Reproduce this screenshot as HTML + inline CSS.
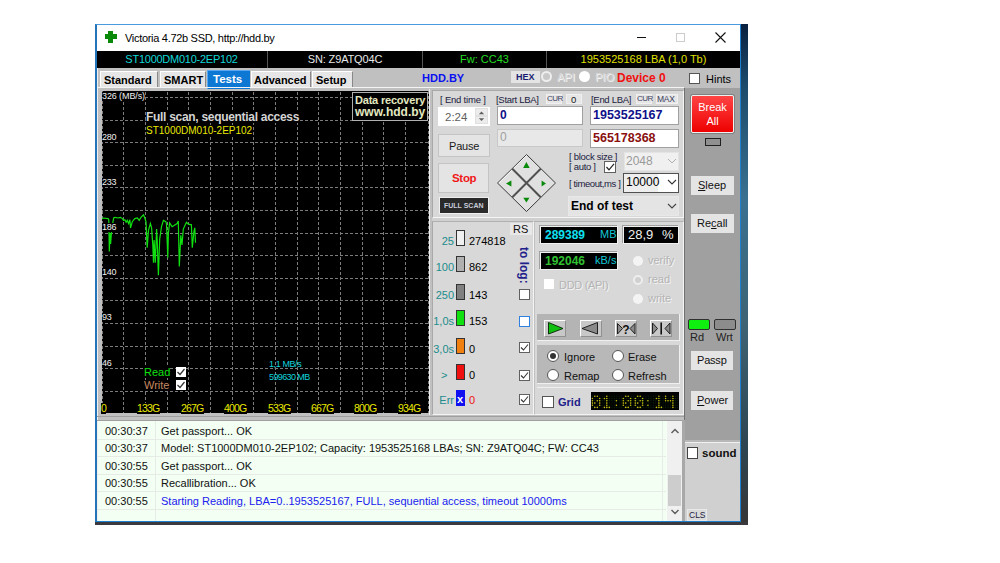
<!DOCTYPE html>
<html><head><meta charset="utf-8">
<style>
*{margin:0;padding:0;box-sizing:border-box}
html,body{width:1000px;height:563px;overflow:hidden;background:#fff;font-family:"Liberation Sans",sans-serif}
.a{position:absolute}
.t{position:absolute;white-space:pre;line-height:1}
.btn{position:absolute;background:#e1e1e1;border:1px solid #adadad;text-align:center;color:#000}
.chk{position:absolute;background:#fff;border:1px solid #555}
</style></head><body>
<!-- desktop strips -->
<div class="a" style="left:741px;top:24px;width:7px;height:500px;background:linear-gradient(#0a2040,#1c4a6a 12%,#3a7090 35%,#3e6474 60%,#2e4450 85%,#363636)"></div>
<div class="a" style="left:95px;top:522px;width:653px;height:3px;background:#3a3a3e"></div>
<!-- window -->
<div class="a" style="left:95px;top:24px;width:646px;height:498px;border:1px solid #1c7fd0;border-top-color:#4a9ae0;border-left:2px solid #2674b8;background:#c0c0c0"></div>
<div class="a" style="left:97px;top:25px;width:1px;height:496px;background:#f0f0f0"></div>
<!-- title bar -->
<div class="a" style="left:97px;top:25px;width:643px;height:26px;background:#fff"></div>
<div class="a" style="left:105px;top:34px;width:12px;height:5px;background:#088a08"></div>
<div class="a" style="left:108px;top:31px;width:5px;height:12px;background:#088a08"></div>
<div class="t" style="left:125px;top:33px;font-size:11px;letter-spacing:-0.3px;color:#000">Victoria 4.72b SSD, http://hdd.by</div>
<div class="a" style="left:637px;top:37px;width:9px;height:1px;background:#111"></div>
<div class="a" style="left:676px;top:33px;width:9px;height:9px;border:1px solid #ccc"></div>
<svg class="a" style="left:715px;top:32px" width="11" height="11"><path d="M0.5 0.5L10.5 10.5M10.5 0.5L0.5 10.5" stroke="#111" stroke-width="1.1"/></svg>
<!-- black info bar -->
<div class="a" style="left:97px;top:51px;width:643px;height:17px;background:#000"></div>
<div class="a" style="left:267px;top:51px;width:1px;height:17px;background:#555"></div>
<div class="a" style="left:422px;top:51px;width:1px;height:17px;background:#555"></div>
<div class="a" style="left:546px;top:51px;width:1px;height:17px;background:#555"></div>
<div class="t" style="left:96px;width:171px;top:54px;text-align:center;font-size:11px;letter-spacing:-0.25px;color:#10d8d8">ST1000DM010-2EP102</div>
<div class="t" style="left:268px;width:154px;top:54px;text-align:center;font-size:11px;letter-spacing:-0.15px;color:#e8e8e8">SN: Z9ATQ04C</div>
<div class="t" style="left:423px;width:123px;top:54px;text-align:center;font-size:11px;color:#22dd22">Fw: CC43</div>
<div class="t" style="left:547px;width:193px;top:54px;text-align:center;font-size:11px;color:#e0e000">1953525168 LBA (1,0 Tb)</div>

<!-- tab row -->
<div class="a" style="left:100px;top:71px;width:58px;height:16px;background:#e6e6e6;border-top:1px solid #fff;border-left:1px solid #fff;border-right:1px solid #888"></div>
<div class="t" style="left:104px;top:75px;font-size:11px;font-weight:bold;color:#000">Standard</div>
<div class="a" style="left:160px;top:71px;width:46px;height:16px;background:#e6e6e6;border-top:1px solid #fff;border-left:1px solid #fff;border-right:1px solid #888"></div>
<div class="t" style="left:164px;top:75px;font-size:11px;font-weight:bold;color:#000">SMART</div>
<div class="a" style="left:207px;top:70px;width:43px;height:19px;background:#0d78d4;border-top:1px solid #5aa8f0;border-left:1px solid #5aa8f0"></div>
<div class="t" style="left:213px;top:74px;font-size:11.5px;font-weight:bold;color:#fff">Tests</div>
<div class="a" style="left:251px;top:71px;width:60px;height:16px;background:#e6e6e6;border-top:1px solid #fff;border-left:1px solid #fff;border-right:1px solid #888"></div>
<div class="t" style="left:254px;top:75px;font-size:11px;font-weight:bold;color:#000">Advanced</div>
<div class="a" style="left:312px;top:71px;width:41px;height:16px;background:#e6e6e6;border-top:1px solid #fff;border-left:1px solid #fff;border-right:1px solid #888"></div>
<div class="t" style="left:316px;top:75px;font-size:11px;font-weight:bold;color:#000">Setup</div>
<div class="t" style="left:422px;top:73px;font-size:11px;font-weight:bold;color:#0a10f0">HDD.BY</div>
<div class="a" style="left:511px;top:71px;width:29px;height:12px;background:#e4e4e4"></div>
<div class="t" style="left:516px;top:73px;font-size:9px;font-weight:bold;color:#1a1a70">HEX</div>
<div class="a" style="left:541px;top:71px;width:11px;height:11px;border-radius:50%;background:#c8c8c8;border:2px solid #eee"></div>
<div class="t" style="left:557px;top:72px;font-size:11px;color:#d8d8d8;text-shadow:1px 1px 0 #f4f4f4">API</div>
<div class="a" style="left:579px;top:71px;width:11px;height:11px;border-radius:50%;background:#fff"></div>
<div class="t" style="left:595px;top:72px;font-size:11px;color:#d8d8d8;text-shadow:1px 1px 0 #f4f4f4">PIO</div>
<div class="t" style="left:617px;top:72px;font-size:12px;font-weight:bold;color:#f01010">Device 0</div>
<div class="chk" style="left:689px;top:73px;width:11px;height:11px"></div>
<div class="t" style="left:706px;top:74px;font-size:11px;color:#000">Hints</div>
<!-- content frame lines -->
<div class="a" style="left:97px;top:87px;width:587px;height:1px;background:#f4f4f4"></div>
<!-- graph -->
<div class="a" style="left:102px;top:91px;width:327px;height:322px;background:#000"></div>
<svg class="a" style="left:102px;top:91px" width="327" height="322">
<path d="M0.5 0V322M326.5 0V322" stroke="#808080" stroke-width="1" stroke-dasharray="3 2"/>
<path d="M21.5 0V322M43.5 0V322M65.5 0V322M86.5 0V322M108.5 0V322M130.5 0V322M151.5 0V322M173.5 0V322M195.5 0V322M216.5 0V322M238.5 0V322M260.5 0V322M281.5 0V322M303.5 0V322" stroke="#7c7c7c" stroke-width="1" stroke-dasharray="3 2" stroke-dashoffset="4"/><path d="M0 6.5H327M0 29.5H327M0 51.5H327M0 74.5H327M0 96.5H327M0 119.5H327M0 142.5H327M0 164.5H327M0 187.5H327M0 209.5H327M0 232.5H327M0 255.5H327M0 277.5H327M0 300.5H327" stroke="#7c7c7c" stroke-width="1" stroke-dasharray="3 2" stroke-dashoffset="2"/>
<polyline fill="none" stroke="#10e010" stroke-width="1.2" points="-0.5,128.2 1.1,127.0 6.1,127.6 6.8,129.0 7.3,160.5 8.0,142.0 8.6,153.0 9.8,137.0 11.7,127.0 13.0,126.3 16.0,127.0 18.5,126.3 20.4,127.6 21.6,129.4 22.9,128.8 24.1,131.3 25.3,129.4 26.6,132.5 27.9,128.8 28.5,137.0 30.3,130.7 32.8,127.6 35.3,127.0 37.2,129.4 39.0,126.3 41.5,123.8 42.8,127.0 44.0,130.7 45.2,156.8 46.5,139.0 48.4,132.5 49.6,136.9 50.8,154.3 51.5,171.7 52.1,149.0 53.3,171.7 54.6,138.1 55.2,149.0 56.4,184.2 57.7,148.0 59.5,135.7 61.4,129.4 63.9,130.7 64.5,133.0 65.8,166.8 66.4,142.0 67.6,131.9 70.1,135.7 75.1,132.5 76.3,130.0 77.3,175.5 78.8,144.4 80.0,154.0 81.3,138.1 84.4,131.3 86.3,133.2 89.4,133.8 90.3,156.8 91.9,140.6 92.8,136.9 93.5,151.8"/>
</svg>
<div class="t" style="background:#000;left:102px;top:92px;font-size:9px;letter-spacing:-0.1px;color:#f0f0f0">326 (MB/s)</div>
<div class="t" style="background:#000;left:102px;top:133px;font-size:9px;letter-spacing:-0.3px;color:#f0f0f0">280</div>
<div class="t" style="background:#000;left:102px;top:178px;font-size:9px;letter-spacing:-0.3px;color:#f0f0f0">233</div>
<div class="t" style="background:#000;left:102px;top:223px;font-size:9px;letter-spacing:-0.3px;color:#f0f0f0">186</div>
<div class="t" style="background:#000;left:102px;top:268px;font-size:9px;letter-spacing:-0.3px;color:#f0f0f0">140</div>
<div class="t" style="background:#000;left:102px;top:313px;font-size:9px;letter-spacing:-0.3px;color:#f0f0f0">93</div>
<div class="t" style="background:#000;left:102px;top:359px;font-size:9px;letter-spacing:-0.3px;color:#f0f0f0">46</div>
<div class="t" style="background:#000;left:146px;top:111px;font-size:12px;font-weight:bold;letter-spacing:-0.3px;color:#d4d4d4">Full scan, sequential access</div>
<div class="t" style="background:#000;left:146px;top:126px;font-size:10px;color:#e8e800">ST1000DM010-2EP102</div>
<div class="a" style="left:352px;top:92px;width:76px;height:29px;background:#000;border:1px solid #b0b0b0"></div>
<div class="t" style="left:355px;top:95px;font-size:11px;letter-spacing:-0.2px;font-weight:bold;color:#e4e8c0">Data recovery</div>
<div class="t" style="left:355px;top:106px;font-size:12px;font-weight:bold;color:#e4e8c0">www.hdd.by</div>
<div class="t" style="background:#000;left:144px;top:367px;font-size:11px;color:#10e010">Read</div>
<div class="t" style="background:#000;left:144px;top:380px;font-size:11px;color:#c88860">Write</div>
<div class="a" style="left:176px;top:367px;width:10px;height:10px;background:#fff"></div>
<div class="a" style="left:176px;top:380px;width:10px;height:10px;background:#fff"></div>
<svg class="a" style="left:176px;top:367px" width="10" height="24"><path d="M1.5 5L4 7.5L8.5 2M1.5 18L4 20.5L8.5 15" fill="none" stroke="#333" stroke-width="1.2"/></svg>
<div class="t" style="left:269px;top:360px;font-size:9px;letter-spacing:-0.4px;color:#10d4dc">1,1 MB/s</div>
<div class="t" style="left:269px;top:373px;font-size:9px;letter-spacing:-0.6px;color:#10d4dc">599630 MB</div>
<div class="t" style="background:#000;left:101px;top:403px;font-size:10.5px;letter-spacing:-0.8px;color:#e8e800">0</div>
<div class="t" style="background:#000;left:137px;top:403px;font-size:10.5px;letter-spacing:-0.8px;color:#e8e800">133G</div>
<div class="t" style="background:#000;left:181px;top:403px;font-size:10.5px;letter-spacing:-0.8px;color:#e8e800">267G</div>
<div class="t" style="background:#000;left:224px;top:403px;font-size:10.5px;letter-spacing:-0.8px;color:#e8e800">400G</div>
<div class="t" style="background:#000;left:268px;top:403px;font-size:10.5px;letter-spacing:-0.8px;color:#e8e800">533G</div>
<div class="t" style="background:#000;left:311px;top:403px;font-size:10.5px;letter-spacing:-0.8px;color:#e8e800">667G</div>
<div class="t" style="background:#000;left:354px;top:403px;font-size:10.5px;letter-spacing:-0.8px;color:#e8e800">800G</div>
<div class="t" style="background:#000;left:398px;top:403px;font-size:10.5px;letter-spacing:-0.8px;color:#e8e800">934G</div>

<!-- right strip of graph -->
<div class="a" style="left:429px;top:89px;width:1px;height:326px;background:#f0f0f0"></div>
<!-- control panel upper -->
<div class="a" style="left:432px;top:90px;width:252px;height:128px;background:#d8d8d8;border-left:1px solid #a8a8a8;border-top:1px solid #a8a8a8;border-right:1px solid #f4f4f4;border-bottom:1px solid #f4f4f4"></div>
<div class="t" style="left:440px;top:95px;font-size:9.5px;letter-spacing:-0.2px;color:#202040">[ End time ]</div>
<div class="a" style="left:438px;top:107px;width:52px;height:19px;background:#fff"></div>
<div class="t" style="left:445px;top:112px;font-size:11.5px;color:#606060">2:24</div>
<div class="a" style="left:475px;top:108px;width:13px;height:16px;background:#ececec;border:1px solid #e0e0e0"></div>
<svg class="a" style="left:475px;top:108px" width="13" height="16"><path d="M1 8H12" stroke="#d4d4d4"/><path d="M3.8 6.2L6.5 3.5L9.2 6.2Z M3.8 10.3L6.5 13L9.2 10.3Z" fill="#606060"/></svg>
<div class="btn" style="left:438px;top:134px;width:52px;height:23px;border-color:#c4c4c4;background:#e4e4e4"></div>
<div class="t" style="left:449px;top:141px;font-size:11px;letter-spacing:-0.2px;color:#1a1a1a">Pause</div>
<div class="btn" style="left:438px;top:163px;width:51px;height:30px;border-color:#c4c4c4;background:#e4e4e4"></div>
<div class="t" style="left:452px;top:173px;font-size:11.5px;letter-spacing:-0.3px;font-weight:bold;color:#f01818">Stop</div>
<div class="a" style="left:439px;top:197px;width:50px;height:17px;background:#2a2a2a;border:1px solid #f0f0f0"></div>
<div class="t" style="left:444px;top:202px;font-size:7px;font-weight:bold;color:#c8ccd8">FULL SCAN</div>
<div class="t" style="left:496px;top:95px;font-size:9.5px;letter-spacing:-0.3px;color:#202040">[Start LBA]</div>
<div class="a" style="left:546px;top:94px;width:16px;height:10px;background:#e6e6e6;border:1px solid #f0f0f0"></div>
<div class="t" style="left:547px;top:95px;font-size:8px;letter-spacing:-0.5px;color:#404060">CUR</div>
<div class="a" style="left:566px;top:94px;width:16px;height:10px;background:#e6e6e6;border:1px solid #f0f0f0"></div>
<div class="t" style="left:571px;top:95px;font-size:9.5px;color:#202020">0</div>
<div class="a" style="left:497px;top:106px;width:86px;height:19px;background:#fff;border:1px solid #a0a0a0"></div>
<div class="t" style="left:500px;top:109px;font-size:12px;font-weight:bold;color:#10108a">0</div>
<div class="a" style="left:497px;top:129px;width:86px;height:18px;background:#e8e8e8;border:1px solid #c8c8c8"></div>
<div class="t" style="left:500px;top:131px;font-size:12px;color:#a0a0a0">0</div>
<div class="t" style="left:591px;top:95px;font-size:9.5px;letter-spacing:-0.3px;color:#202040">[End LBA]</div>
<div class="a" style="left:636px;top:94px;width:16px;height:10px;background:#e6e6e6;border:1px solid #f0f0f0"></div>
<div class="t" style="left:637px;top:95px;font-size:8px;letter-spacing:-0.5px;color:#404060">CUR</div>
<div class="a" style="left:656px;top:94px;width:22px;height:10px;background:#e6e6e6;border:1px solid #f0f0f0"></div>
<div class="t" style="left:657px;top:95px;font-size:8.5px;letter-spacing:-0.3px;color:#404060">MAX</div>
<div class="a" style="left:590px;top:106px;width:89px;height:19px;background:#fff;border:1px solid #a0a0a0"></div>
<div class="t" style="left:593px;top:109px;font-size:12.5px;font-weight:bold;color:#10108a">1953525167</div>
<div class="a" style="left:590px;top:129px;width:89px;height:19px;background:#fff;border:1px solid #a0a0a0"></div>
<div class="t" style="left:593px;top:132px;font-size:12.5px;font-weight:bold;color:#8a1010">565178368</div>
<svg class="a" style="left:495px;top:150px" width="65" height="65">
<path d="M31.5 4.5L60.5 33L31.5 61.5L2.5 33Z" fill="#e0e0e0"/>
<path d="M17.5 18.8L31.5 4.8M3.3 33L17.3 19M31.5 33L45.5 19M17.3 47.2L31.3 33.2" stroke="#fcfcfc" stroke-width="1.3"/>
<path d="M31.5 4.5L60.5 33L31.5 61.5L2.5 33Z" fill="none" stroke="#3a3a3a" stroke-width="1"/>
<path d="M17.3 18.8L45.7 47.2M45.7 18.8L17.3 47.2" stroke="#505050" stroke-width="2"/>
<path d="M31.4 12.1L28.1 17.9H34.7Z M11 33.5L16.4 30.4V36.6Z M51 33.5L46.6 30.4V36.6Z M31.4 52.5L28.3 47.7H34.5Z" fill="#0a8a0a"/>
</svg>
<div class="t" style="left:569px;top:152px;font-size:9.5px;letter-spacing:-0.3px;color:#202040">[ block size ]</div>
<div class="t" style="left:569px;top:162px;font-size:9.5px;letter-spacing:-0.3px;color:#202040">[ auto ]</div>
<div class="chk" style="left:604px;top:161px;width:12px;height:12px;border-color:#606060"></div>
<svg class="a" style="left:604px;top:161px" width="12" height="12"><path d="M2.5 6L5 8.8L10 2.8" fill="none" stroke="#222" stroke-width="1.2"/></svg>
<div class="t" style="left:569px;top:179px;font-size:9.5px;letter-spacing:-0.4px;color:#202040">[ timeout,ms ]</div>
<div class="a" style="left:624px;top:152px;width:55px;height:19px;background:#f0f0f0;border:1px solid #e4e4e4"></div>
<div class="t" style="left:626px;top:155px;font-size:12px;color:#9a9a9a">2048</div>
<svg class="a" style="left:667px;top:158px" width="10" height="6"><path d="M1 1L5 5L9 1" fill="none" stroke="#b0b0b0" stroke-width="1"/></svg>
<div class="a" style="left:623px;top:173px;width:56px;height:20px;background:#fff;border:1px solid #505050"></div>
<div class="a" style="left:624px;top:174px;width:34px;height:18px;background:#eeeeee"></div>
<div class="t" style="left:626px;top:176px;font-size:12px;color:#000">10000</div>
<svg class="a" style="left:667px;top:179px" width="10" height="6"><path d="M1 1L5 5L9 1" fill="none" stroke="#333" stroke-width="1.1"/></svg>
<div class="a" style="left:568px;top:196px;width:111px;height:20px;background:#e4e4e4;border:1px solid #e8e8e8"></div>
<div class="t" style="left:571px;top:200px;font-size:12px;font-weight:bold;color:#000">End of test</div>
<svg class="a" style="left:667px;top:203px" width="10" height="6"><path d="M1 1L5 5L9 1" fill="none" stroke="#444" stroke-width="1.1"/></svg>

<!-- lower left subpanel -->
<div class="a" style="left:432px;top:218px;width:252px;height:3px;background:#d0d0d0"></div>
<div class="a" style="left:432px;top:221px;width:102px;height:194px;background:#d8d8d8;border-left:1px solid #a8a8a8;border-top:1px solid #b0b0b0;border-right:1px solid #f4f4f4;border-bottom:1px solid #f4f4f4"></div>
<div class="a" style="left:510px;top:223px;width:22px;height:12px;background:#e8e8e8"></div>
<div class="t" style="left:513px;top:224px;font-size:11px;color:#111">RS</div>
<div class="t" style="left:518px;top:247px;font-size:12px;font-weight:bold;color:#20208a;transform-origin:0 0;transform:translate(12px,0) rotate(90deg)">to log:</div>
<div class="t" style="left:432px;width:22px;top:236px;text-align:right;font-size:11px;color:#208c8c">25</div>
<div class="a" style="left:456px;top:230px;width:9px;height:16px;background:#f0f0f0;border:1px solid #333"></div>
<div class="t" style="left:469px;top:236px;font-size:11px;color:#000">274818</div>
<div class="t" style="left:432px;width:22px;top:262px;text-align:right;font-size:11px;color:#208c8c">100</div>
<div class="a" style="left:456px;top:256px;width:9px;height:16px;background:#b0b0b0;border:1px solid #333"></div>
<div class="t" style="left:469px;top:262px;font-size:11px;color:#000">862</div>
<div class="t" style="left:432px;width:22px;top:290px;text-align:right;font-size:11px;color:#208c8c">250</div>
<div class="a" style="left:456px;top:284px;width:9px;height:16px;background:#808080;border:1px solid #333"></div>
<div class="t" style="left:469px;top:290px;font-size:11px;color:#000">143</div>
<div class="chk" style="left:519px;top:289px;width:11px;height:11px;border-color:#606060"></div>
<div class="t" style="left:432px;width:22px;top:316px;text-align:right;font-size:11px;color:#208c8c">1,0s</div>
<div class="a" style="left:456px;top:310px;width:9px;height:16px;background:#10e010;border:1px solid #333"></div>
<div class="t" style="left:469px;top:316px;font-size:11px;color:#000">153</div>
<div class="chk" style="left:519px;top:316px;width:11px;height:11px;border-color:#3080e0"></div>
<div class="t" style="left:432px;width:22px;top:344px;text-align:right;font-size:11px;color:#208c8c">3,0s</div>
<div class="a" style="left:456px;top:338px;width:9px;height:16px;background:#f08010;border:1px solid #333"></div>
<div class="t" style="left:469px;top:344px;font-size:11px;color:#000">0</div>
<div class="chk" style="left:519px;top:342px;width:11px;height:11px;border-color:#606060"></div>
<svg class="a" style="left:519px;top:342px" width="11" height="11"><path d="M2 5.5L4.5 8L9 2.5" fill="none" stroke="#333" stroke-width="1.1"/></svg>
<div class="t" style="left:441px;top:370px;font-size:11px;color:#208c8c">&gt;</div>
<div class="a" style="left:456px;top:364px;width:9px;height:16px;background:#f01010;border:1px solid #333"></div>
<div class="t" style="left:469px;top:370px;font-size:11px;color:#000">0</div>
<div class="chk" style="left:519px;top:370px;width:11px;height:11px;border-color:#606060"></div>
<svg class="a" style="left:519px;top:370px" width="11" height="11"><path d="M2 5.5L4.5 8L9 2.5" fill="none" stroke="#333" stroke-width="1.1"/></svg>
<div class="t" style="left:432px;width:22px;top:395px;text-align:right;font-size:11px;color:#208c8c">Err</div>
<div class="a" style="left:456px;top:390px;width:9px;height:16px;background:#1010f0"></div>
<div class="t" style="left:457px;top:394px;font-size:11px;font-weight:bold;color:#fff">x</div>
<div class="t" style="left:469px;top:395px;font-size:11px;color:#f01010">0</div>
<div class="chk" style="left:519px;top:394px;width:11px;height:11px;border-color:#606060"></div>
<svg class="a" style="left:519px;top:394px" width="11" height="11"><path d="M2 5.5L4.5 8L9 2.5" fill="none" stroke="#333" stroke-width="1.1"/></svg>

<!-- lower right subpanel -->
<div class="a" style="left:534px;top:221px;width:150px;height:194px;background:#d8d8d8;border-left:1px solid #c0c0c0;border-top:1px solid #b0b0b0;border-right:1px solid #f4f4f4;border-bottom:1px solid #f4f4f4"></div>
<div class="a" style="left:540px;top:226px;width:78px;height:18px;background:#000;border:1px solid #f0f0f0;box-shadow:-1px -1px 0 #a0a0a0"></div>
<div class="t" style="left:545px;top:229px;font-size:12px;font-weight:bold;color:#10e0f0">289389</div>
<div class="t" style="left:600px;top:229px;font-size:11px;color:#10c8d8">MB</div>
<div class="a" style="left:623px;top:226px;width:56px;height:18px;background:#000;border:1px solid #f0f0f0;box-shadow:-1px -1px 0 #a0a0a0"></div>
<div class="t" style="left:628px;top:228px;font-size:13px;color:#f0f0f0">28,9</div>
<div class="t" style="left:662px;top:228px;font-size:13px;color:#f0f0f0">%</div>
<div class="a" style="left:540px;top:252px;width:78px;height:18px;background:#000;border:1px solid #f0f0f0;box-shadow:-1px -1px 0 #a0a0a0"></div>
<div class="t" style="left:545px;top:255px;font-size:12px;font-weight:bold;color:#30c030">192046</div>
<div class="t" style="left:595px;top:255px;font-size:11px;color:#10c8d8">kB/s</div>
<div class="a" style="left:544px;top:279px;width:10px;height:10px;background:#fff"></div>
<div class="t" style="left:559px;top:280px;font-size:11px;letter-spacing:-0.3px;color:#b4b4b4;text-shadow:1px 1px 0 #f4f4f4">DDD (API)</div>
<div class="a" style="left:633px;top:256px;width:10px;height:10px;border-radius:50%;background:#f4f4f4"></div>
<div class="t" style="left:648px;top:255px;font-size:11px;color:#b4b4b4;text-shadow:1px 1px 0 #f4f4f4">verify</div>
<div class="a" style="left:633px;top:275px;width:10px;height:10px;border-radius:50%;background:#d0d0d0;border:2px solid #eee"></div>
<div class="t" style="left:648px;top:274px;font-size:11px;color:#b4b4b4;text-shadow:1px 1px 0 #f4f4f4">read</div>
<div class="a" style="left:633px;top:294px;width:10px;height:10px;border-radius:50%;background:#f4f4f4"></div>
<div class="t" style="left:648px;top:293px;font-size:11px;color:#b4b4b4;text-shadow:1px 1px 0 #f4f4f4">write</div>

<div class="a" style="left:537px;top:314px;width:143px;height:27px;background:#b4b4b4;border-right:1px solid #f0f0f0;border-bottom:1px solid #f0f0f0"></div>
<div class="a" style="left:544px;top:320px;width:22px;height:17px;background:#c8c8c8;border-top:1px solid #fff;border-left:1px solid #fff;border-right:1px solid #909090;border-bottom:1px solid #909090"></div>
<svg class="a" style="left:544px;top:320px" width="22" height="17"><path d="M4.5 2.5L19 8.5L4.5 14Z" fill="#10c010" stroke="#103010" stroke-width="1"/></svg>
<div class="a" style="left:580px;top:320px;width:22px;height:17px;background:#c8c8c8;border-top:1px solid #fff;border-left:1px solid #fff;border-right:1px solid #909090;border-bottom:1px solid #909090"></div>
<svg class="a" style="left:580px;top:320px" width="22" height="17"><path d="M2 8.5L17.5 2.5V14Z" fill="#8a8a8a" stroke="#202020" stroke-width="1"/></svg>
<div class="a" style="left:615px;top:320px;width:22px;height:17px;background:#c8c8c8;border-top:1px solid #fff;border-left:1px solid #fff;border-right:1px solid #909090;border-bottom:1px solid #909090"></div>
<svg class="a" style="left:615px;top:320px" width="22" height="17"><path d="M2.5 3.5L7.5 8.5L2.5 14Z M20 3.5L15 8.5L20 14Z" fill="#8a8a8a" stroke="#202020" stroke-width="1"/><text x="7.3" y="13.5" font-family="Liberation Sans" font-weight="bold" font-size="12" fill="#111">?</text></svg>
<div class="a" style="left:650px;top:320px;width:22px;height:17px;background:#c8c8c8;border-top:1px solid #fff;border-left:1px solid #fff;border-right:1px solid #909090;border-bottom:1px solid #909090"></div>
<svg class="a" style="left:650px;top:320px" width="22" height="17"><path d="M2.5 3L7.5 8.5L2.5 14Z M20 3L15 8.5L20 14Z" fill="#8a8a8a" stroke="#202020" stroke-width="1"/><path d="M11.2 2.5V14.5" stroke="#111" stroke-width="1.6"/></svg>

<div class="a" style="left:537px;top:345px;width:143px;height:39px;background:#b8b8b8;border-right:1px solid #f0f0f0;border-bottom:1px solid #f0f0f0"></div>
<div class="a" style="left:547px;top:350px;width:12px;height:12px;border-radius:50%;background:#fff;border:1px solid #555"></div>
<div class="a" style="left:550px;top:353px;width:6px;height:6px;border-radius:50%;background:#333"></div>
<div class="t" style="left:564px;top:352px;font-size:11px;color:#111">Ignore</div>
<div class="a" style="left:612px;top:350px;width:12px;height:12px;border-radius:50%;background:#fff;border:1px solid #555"></div>
<div class="t" style="left:628px;top:352px;font-size:11px;color:#111">Erase</div>
<div class="a" style="left:547px;top:369px;width:12px;height:12px;border-radius:50%;background:#fff;border:1px solid #555"></div>
<div class="t" style="left:564px;top:371px;font-size:11px;color:#111">Remap</div>
<div class="a" style="left:612px;top:369px;width:12px;height:12px;border-radius:50%;background:#fff;border:1px solid #555"></div>
<div class="t" style="left:628px;top:371px;font-size:11px;color:#111">Refresh</div>
<div class="a" style="left:537px;top:387px;width:143px;height:1px;background:#f0f0f0"></div>
<div class="chk" style="left:542px;top:396px;width:12px;height:12px"></div>
<div class="t" style="left:558px;top:397px;font-size:11px;font-weight:bold;color:#20208a">Grid</div>
<svg class="a" style="left:591px;top:392px" width="88" height="18"><defs><pattern id="ld" x="0.2" y="3" width="2.44" height="2.25" patternUnits="userSpaceOnUse"><circle cx="1.2" cy="1.1" r="0.55" fill="#0a300a"/></pattern></defs><rect width="88" height="18" fill="#000"/><rect x="1" y="3" width="86" height="14" fill="url(#ld)"/><g fill="#c8c010"><circle cx="3.8" cy="4.2" r="0.8"/><circle cx="6.3" cy="4.2" r="0.8"/><circle cx="1.4" cy="6.5" r="0.8"/><circle cx="8.7" cy="6.5" r="0.8"/><circle cx="1.4" cy="8.8" r="0.8"/><circle cx="6.3" cy="8.8" r="0.8"/><circle cx="8.7" cy="8.8" r="0.8"/><circle cx="1.4" cy="11.1" r="0.8"/><circle cx="3.8" cy="11.1" r="0.8"/><circle cx="8.7" cy="11.1" r="0.8"/><circle cx="1.4" cy="13.3" r="0.8"/><circle cx="8.7" cy="13.3" r="0.8"/><circle cx="3.8" cy="15.4" r="0.8"/><circle cx="6.3" cy="15.4" r="0.8"/><circle cx="15.8" cy="4.2" r="0.8"/><circle cx="13.4" cy="6.5" r="0.8"/><circle cx="15.8" cy="6.5" r="0.8"/><circle cx="15.8" cy="8.8" r="0.8"/><circle cx="15.8" cy="11.1" r="0.8"/><circle cx="15.8" cy="13.3" r="0.8"/><circle cx="13.4" cy="15.4" r="0.8"/><circle cx="15.8" cy="15.4" r="0.8"/><circle cx="18.3" cy="15.4" r="0.8"/><circle cx="25.4" cy="8.8" r="0.8"/><circle cx="25.4" cy="13.3" r="0.8"/><circle cx="34.7" cy="4.2" r="0.8"/><circle cx="37.2" cy="4.2" r="0.8"/><circle cx="32.3" cy="6.5" r="0.8"/><circle cx="39.6" cy="6.5" r="0.8"/><circle cx="32.3" cy="8.8" r="0.8"/><circle cx="37.2" cy="8.8" r="0.8"/><circle cx="39.6" cy="8.8" r="0.8"/><circle cx="32.3" cy="11.1" r="0.8"/><circle cx="34.7" cy="11.1" r="0.8"/><circle cx="39.6" cy="11.1" r="0.8"/><circle cx="32.3" cy="13.3" r="0.8"/><circle cx="39.6" cy="13.3" r="0.8"/><circle cx="34.7" cy="15.4" r="0.8"/><circle cx="37.2" cy="15.4" r="0.8"/><circle cx="46.7" cy="4.2" r="0.8"/><circle cx="49.2" cy="4.2" r="0.8"/><circle cx="44.3" cy="6.5" r="0.8"/><circle cx="51.6" cy="6.5" r="0.8"/><circle cx="44.3" cy="8.8" r="0.8"/><circle cx="49.2" cy="8.8" r="0.8"/><circle cx="51.6" cy="8.8" r="0.8"/><circle cx="44.3" cy="11.1" r="0.8"/><circle cx="46.7" cy="11.1" r="0.8"/><circle cx="51.6" cy="11.1" r="0.8"/><circle cx="44.3" cy="13.3" r="0.8"/><circle cx="51.6" cy="13.3" r="0.8"/><circle cx="46.7" cy="15.4" r="0.8"/><circle cx="49.2" cy="15.4" r="0.8"/><circle cx="56.9" cy="8.8" r="0.8"/><circle cx="56.9" cy="13.3" r="0.8"/><circle cx="67.9" cy="4.2" r="0.8"/><circle cx="65.5" cy="6.5" r="0.8"/><circle cx="67.9" cy="6.5" r="0.8"/><circle cx="67.9" cy="8.8" r="0.8"/><circle cx="67.9" cy="11.1" r="0.8"/><circle cx="67.9" cy="13.3" r="0.8"/><circle cx="65.5" cy="15.4" r="0.8"/><circle cx="67.9" cy="15.4" r="0.8"/><circle cx="70.4" cy="15.4" r="0.8"/><circle cx="74.6" cy="4.2" r="0.8"/><circle cx="81.9" cy="4.2" r="0.8"/><circle cx="74.6" cy="6.5" r="0.8"/><circle cx="81.9" cy="6.5" r="0.8"/><circle cx="74.6" cy="8.8" r="0.8"/><circle cx="77.0" cy="8.8" r="0.8"/><circle cx="79.5" cy="8.8" r="0.8"/><circle cx="81.9" cy="8.8" r="0.8"/><circle cx="81.9" cy="11.1" r="0.8"/><circle cx="81.9" cy="13.3" r="0.8"/><circle cx="81.9" cy="15.4" r="0.8"/></g></svg>

<!-- right column -->
<div class="a" style="left:684px;top:88px;width:1px;height:352px;background:#707070"></div>
<div class="a" style="left:685px;top:88px;width:55px;height:352px;background:#a0a0a0"></div>
<div class="a" style="left:691px;top:95px;width:43px;height:38px;background:linear-gradient(#f44,#e00);border:1px solid #f0f0f0;border-radius:2px;box-shadow:0 0 0 1px #808080"></div>
<div class="t" style="left:691px;width:43px;top:101px;text-align:center;font-size:11px;line-height:13.5px;color:#fff">Break<br>All</div>
<div class="a" style="left:705px;top:138px;width:16px;height:8px;background:#909090;border:1px solid #202020"></div>
<div class="btn" style="left:691px;top:176px;width:43px;height:19px;border:none;background:#e4e4e4"></div>
<div class="t" style="left:698px;top:180px;font-size:11px;color:#111"><u>S</u>leep</div>
<div class="btn" style="left:691px;top:214px;width:43px;height:19px;border:none;background:#e4e4e4"></div>
<div class="t" style="left:697px;top:218px;font-size:11px;color:#111">Re<u>c</u>all</div>
<div class="a" style="left:688px;top:319px;width:22px;height:11px;background:#10f010;border:1px solid #303030;border-radius:2px"></div>
<div class="a" style="left:714px;top:319px;width:22px;height:11px;background:#8c8c8c;border:1px solid #303030;border-radius:2px"></div>
<div class="t" style="left:690px;top:332px;font-size:11px;color:#222">Rd</div>
<div class="t" style="left:716px;top:332px;font-size:11px;color:#222">Wrt</div>
<div class="btn" style="left:691px;top:351px;width:42px;height:19px;border:none;background:#e4e4e4"></div>
<div class="t" style="left:697px;top:355px;font-size:11px;letter-spacing:-0.2px;color:#111">Passp</div>
<div class="btn" style="left:691px;top:391px;width:42px;height:19px;border:none;background:#e4e4e4"></div>
<div class="t" style="left:697px;top:395px;font-size:11px;color:#111"><u>P</u>ower</div>
<!-- lower right -->
<div class="a" style="left:684px;top:440px;width:56px;height:2px;background:#b8b8b8"></div>
<div class="a" style="left:684px;top:442px;width:56px;height:79px;background:#d0d0d0;border-top:1px solid #f0f0f0"></div>
<div class="chk" style="left:687px;top:447px;width:11px;height:12px;border-color:#444"></div>
<div class="t" style="left:702px;top:448px;font-size:11.5px;font-weight:bold;color:#111">sound</div>
<div class="a" style="left:687px;top:509px;width:20px;height:12px;background:#dadada;border:1px solid #e8e8e8"></div>
<div class="t" style="left:689px;top:511px;font-size:8.5px;color:#202040">CLS</div>
<!-- log -->
<div class="a" style="left:97px;top:416px;width:587px;height:1px;background:#a0a0a0"></div>
<div class="a" style="left:97px;top:420px;width:586px;height:1px;background:#a0a0a0"></div>
<div class="a" style="left:98px;top:421px;width:569px;height:100px;background:#f2fff2"></div>
<div class="a" style="left:155px;top:421px;width:1px;height:100px;background:#e6ebe6"></div>
<div class="a" style="left:662px;top:421px;width:1px;height:100px;background:#e6ebe6"></div>
<div class="a" style="left:97px;top:439px;width:569px;height:1px;background:#e6ebe6"></div>
<div class="a" style="left:97px;top:456px;width:569px;height:1px;background:#e6ebe6"></div>
<div class="a" style="left:97px;top:474px;width:569px;height:1px;background:#e6ebe6"></div>
<div class="a" style="left:97px;top:491px;width:569px;height:1px;background:#e6ebe6"></div>
<div class="a" style="left:97px;top:509px;width:569px;height:1px;background:#e6ebe6"></div>
<div class="t" style="left:105px;top:426px;font-size:11px;color:#111">00:30:37</div>
<div class="t" style="left:161px;top:426px;font-size:11px;color:#111">Get passport... OK</div>
<div class="t" style="left:105px;top:443px;font-size:11px;color:#111">00:30:37</div>
<div class="t" style="left:161px;top:443px;font-size:11px;color:#111">Model: ST1000DM010-2EP102; Capacity: 1953525168 LBAs; SN: Z9ATQ04C; FW: CC43</div>
<div class="t" style="left:105px;top:461px;font-size:11px;color:#111">00:30:55</div>
<div class="t" style="left:161px;top:461px;font-size:11px;color:#111">Get passport... OK</div>
<div class="t" style="left:105px;top:478px;font-size:11px;color:#111">00:30:55</div>
<div class="t" style="left:161px;top:478px;font-size:11px;color:#111">Recallibration... OK</div>
<div class="t" style="left:105px;top:496px;font-size:11px;color:#111">00:30:55</div>
<div class="t" style="left:161px;top:496px;font-size:11px;color:#2020f0">Starting Reading, LBA=0..1953525167, FULL, sequential access, timeout 10000ms</div>

<div class="a" style="left:667px;top:421px;width:16px;height:100px;background:#f0f0f0"></div>
<div class="a" style="left:668px;top:475px;width:13px;height:31px;background:#cdcdcd"></div>
<svg class="a" style="left:667px;top:421px" width="16" height="101"><path d="M4.5 12L8 8.5L11.5 12M4.5 89L8 92.5L11.5 89" fill="none" stroke="#606060" stroke-width="1.5"/></svg>
<div class="a" style="left:682px;top:420px;width:3px;height:101px;background:#a8a8a8"></div>
</body></html>
